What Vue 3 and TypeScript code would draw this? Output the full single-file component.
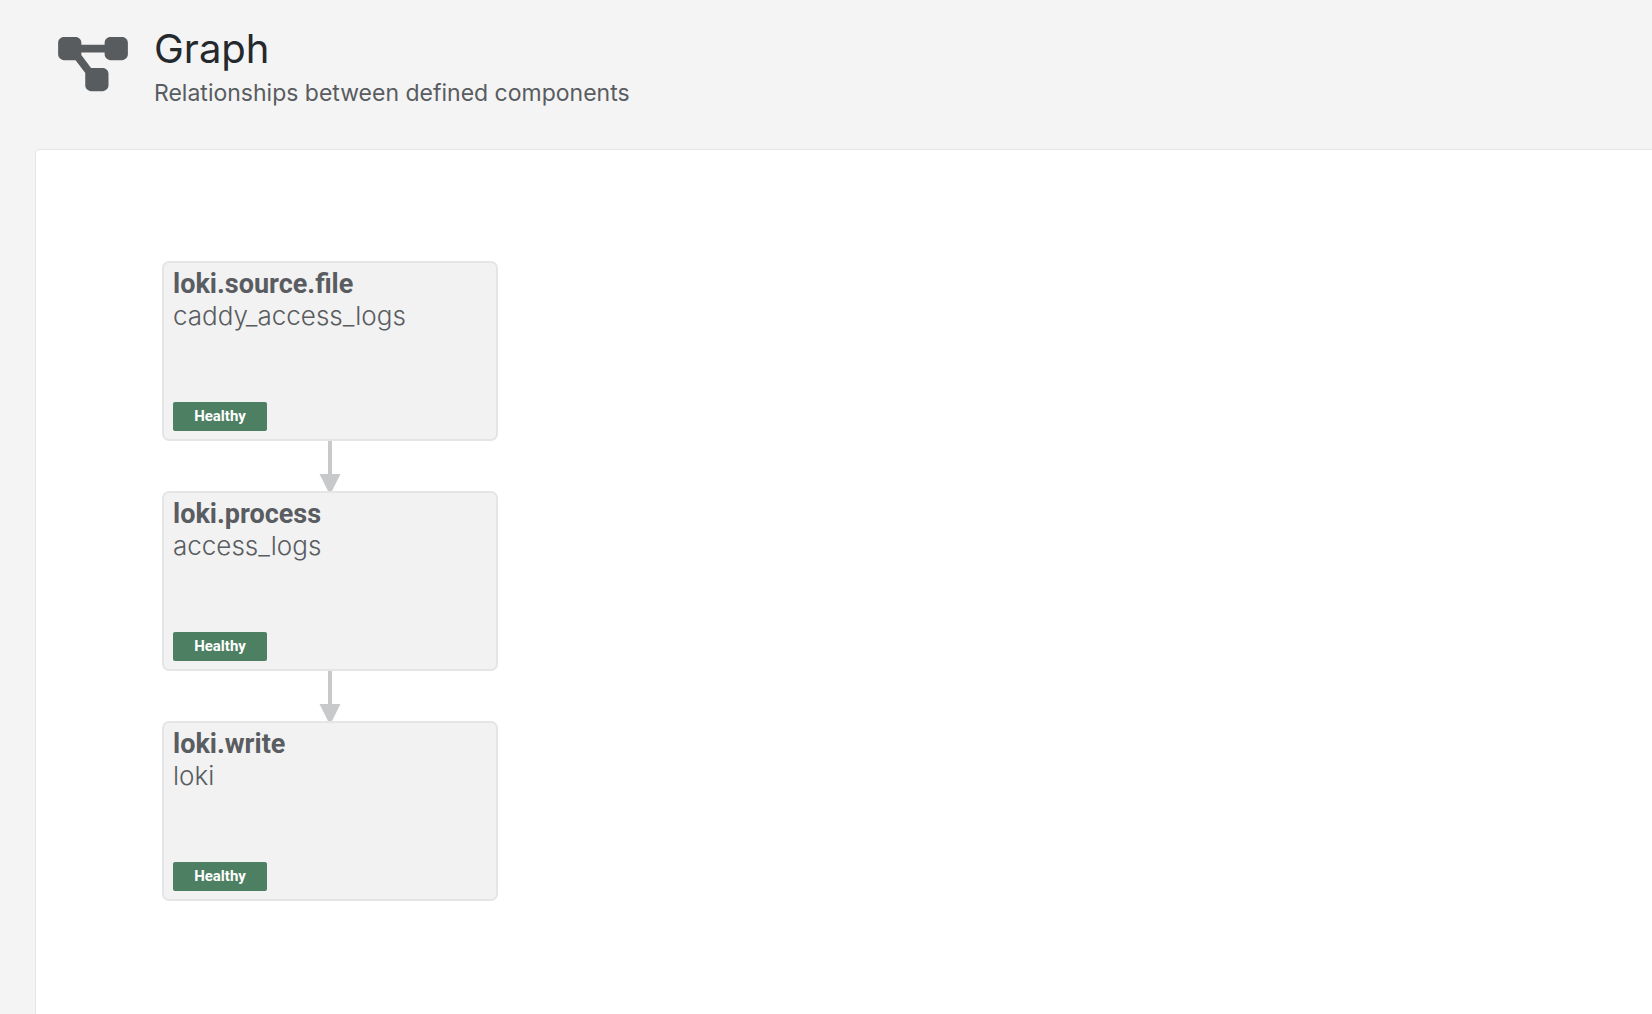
<script setup lang="ts">
interface GraphNode {
  name: string
  label: string
  health: string
}

const nodes: GraphNode[] = [
  { name: 'loki.source.file', label: 'caddy_access_logs', health: 'Healthy' },
  { name: 'loki.process', label: 'access_logs', health: 'Healthy' },
  { name: 'loki.write', label: 'loki', health: 'Healthy' },
]
</script>

<template>
  <main class="page">
    <header class="header">
      <svg class="icon" viewBox="0 0 576 512" aria-hidden="true">
        <path
          fill="currentColor"
          d="M0 80C0 53.5 21.5 32 48 32h96c26.5 0 48 21.5 48 48v16h192V80c0-26.5 21.5-48 48-48h96c26.5 0 48 21.5 48 48v96c0 26.5-21.5 48-48 48h-96c-26.5 0-48-21.5-48-48v-16H192v16c0 1.7-.1 3.4-.3 5L272 288h96c26.5 0 48 21.5 48 48v96c0 26.5-21.5 48-48 48h-96c-26.5 0-48-21.5-48-48v-96c0-1.7.1-3.4.3-5L144 224H48c-26.5 0-48-21.5-48-48V80z"
        />
      </svg>
      <div>
        <h1 class="title">Graph</h1>
        <p class="subtitle">Relationships between defined components</p>
      </div>
    </header>
    <section class="panel">
      <ul class="nodes">
        <li v-for="(node, i) in nodes" :key="node.name" class="step">
          <svg v-if="i > 0" class="arrow" viewBox="0 0 22 50" aria-hidden="true">
            <path fill="#c8c9cb" d="M9 0h4v33h8.5L13 50H9L.5 33H9z" />
          </svg>
          <article class="node">
            <h2 class="name">{{ node.name }}</h2>
            <p class="label">{{ node.label }}</p>
            <span class="health">{{ node.health }}</span>
          </article>
        </li>
      </ul>
    </section>
  </main>
</template>

<style>
body {
  margin: 0;
  background: #f4f4f4;
}
</style>

<style scoped>
.page {
  display: flex;
  flex-direction: column;
  box-sizing: border-box;
  min-height: 100vh;
  padding-left: 35px;
  overflow: hidden;
  color: #595c60;
  font-family: Inter, Roboto, sans-serif;
}

.header {
  display: flex;
  align-items: flex-start;
  gap: 26px;
  padding: 24px 23px 37px;
}

.icon {
  width: 70px;
  height: 62px;
  margin-top: 9px;
  color: #585c5f;
}

.title {
  margin: 0;
  color: #24292e;
  font-size: 40px;
  font-weight: 375;
  line-height: 50px;
}

.subtitle {
  margin: 0;
  font-size: 23px;
  font-weight: 400;
  line-height: 38px;
}

.panel {
  flex: 1;
  padding: 111px 126px;
  background: #fff;
  border: solid #e4e5e6;
  border-width: 1px 0 0 1px;
  border-top-left-radius: 5px;
}

.nodes {
  display: flex;
  flex-direction: column;
  align-items: flex-start;
  margin: 0;
  padding: 0;
  list-style: none;
}

.step {
  display: flex;
  flex-direction: column;
  align-items: center;
}

.arrow {
  width: 22px;
  height: 50px;
}

.node {
  display: flex;
  flex-direction: column;
  align-items: flex-start;
  box-sizing: border-box;
  width: 336px;
  height: 180px;
  padding: 5px 9px 8px;
  background: #f2f2f2;
  border: 2px solid #e4e5e6;
  border-radius: 7px;
}

.name {
  margin: 0;
  font-family: Roboto, sans-serif;
  font-size: 27px;
  font-weight: 700;
  line-height: 32px;
}

.label {
  margin: 0;
  font-size: 26px;
  font-weight: 350;
  line-height: 32px;
}

.health {
  width: 94px;
  margin-top: auto;
  color: #fff;
  background: #4d7f62;
  border-radius: 2px;
  font-family: Roboto, sans-serif;
  font-size: 15px;
  font-weight: 700;
  line-height: 29px;
  text-align: center;
}
</style>
